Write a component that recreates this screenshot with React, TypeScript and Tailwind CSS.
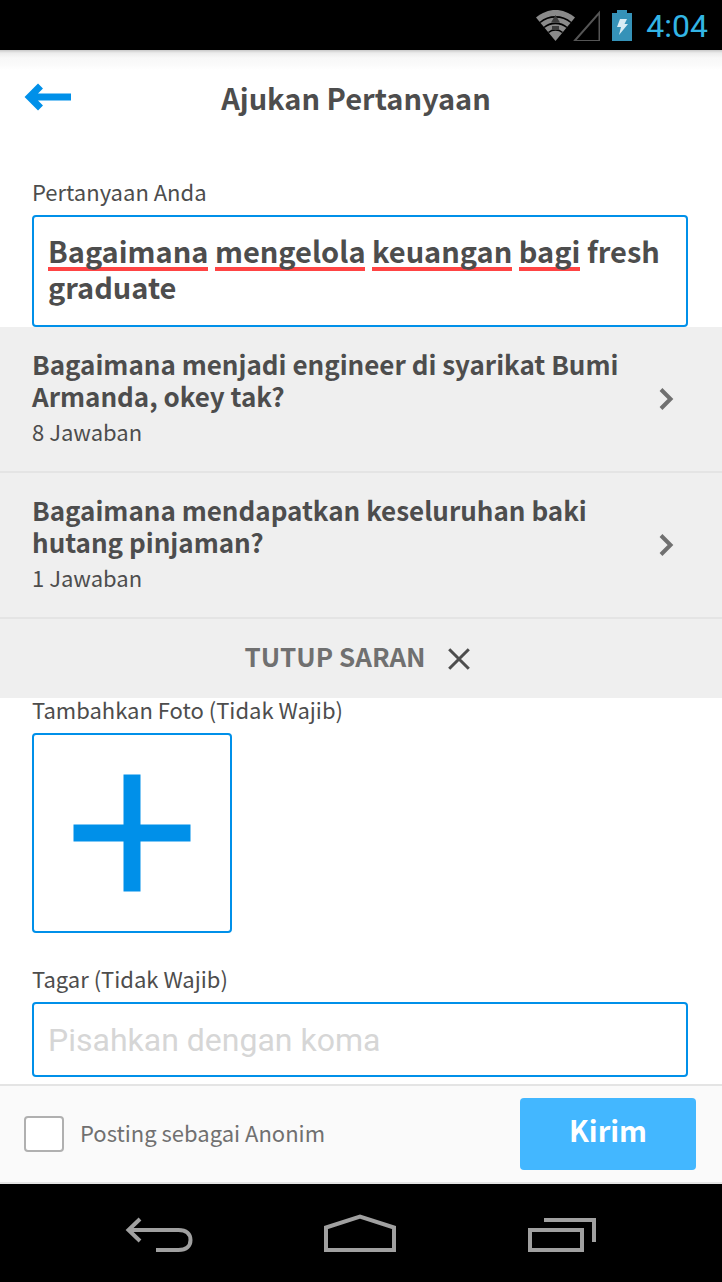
import { useState } from "react";

type Suggestion = { title: string; answers: number };

const suggestions: Suggestion[] = [
  { title: "Bagaimana menjadi engineer di syarikat Bumi Armanda, okey tak?", answers: 8 },
  { title: "Bagaimana mendapatkan keseluruhan baki hutang pinjaman?", answers: 1 },
];

const initialQuestion = "Bagaimana mengelola keuangan bagi fresh graduate";

function StatusBar() {
  return (
    <div className="flex h-[50px] shrink-0 items-center justify-end bg-black pr-[14px]">
      <svg className="h-8 w-10" viewBox="0 0 40 32" aria-label="Wi-Fi">
        <path d="M0 8.500C12 -1.500 27 -1.500 39 8.500L19.500 32Z" fill="#8a8a8a" />
        <path d="M4 13.500C13 6 26 6 35 13.500M8 18.500C14.500 13 24.500 13 31 18.500M12.500 23.500C16.500 20 22.500 20 26.500 23.500" fill="none" stroke="#000" strokeWidth="1.600" />
        <path d="M19.500 6l4.500 7.500h-9zM16 17h7v4h-7z" fill="#3d3d3d" />
      </svg>
      <svg className="-ml-1 h-8 w-7" viewBox="0 0 28 32" aria-label="Sinyal">
        <path d="M2.500 32L27.500 3.500V32Z" fill="none" stroke="#555" strokeWidth="2" />
      </svg>
      <svg className="ml-3 h-8 w-5" viewBox="0 0 20 32" aria-label="Baterai">
        <path d="M0 4h5V1h10v3h5v28H0Z" fill="#3592b8" />
        <path d="M8 10h7l-2.500 5H16L7 26l2-8H5Z" fill="#d9ecf4" />
      </svg>
      <span className="ml-[14px] pt-0.5 font-['Roboto',sans-serif] text-[32px] leading-9 text-[#33b5e5]">4:04</span>
    </div>
  );
}

function QuestionField() {
  const [question, setQuestion] = useState(initialQuestion);
  return (
    <div className="relative rounded border-2 border-[#0090e9] bg-white px-3.5 py-[15px]">
      {question === initialQuestion && (
        <div aria-hidden="true" className="pointer-events-none absolute top-[50px] left-3.5 flex h-1 gap-[7px]">
          <span className="w-40 bg-[#ff4444]" />
          <span className="w-[150px] bg-[#ff4444]" />
          <span className="w-[140px] bg-[#ff4444]" />
          <span className="w-[61px] bg-[#ff4444]" />
        </div>
      )}
      <textarea
        id="question"
        rows={2}
        spellCheck={false}
        value={question}
        onChange={(e) => setQuestion(e.target.value)}
        className="relative block h-[78px] w-full resize-none overflow-hidden bg-transparent text-[29px] leading-9 font-bold text-[#4d4d4d] outline-none"
      />
    </div>
  );
}

function SuggestionRow({ title, answers }: Suggestion) {
  return (
    <li className="border-b-2 border-[#e4e4e4]">
      <a href="#jawaban" className="flex items-center pr-12 pl-8">
        <span className="flex flex-1 flex-col gap-1.5 pt-[21px] pr-4 pb-[27px]">
          <span className="text-[26px] leading-8 font-bold">{title}</span>
          <span className="text-[22px] leading-[26px]">{answers} Jawaban</span>
        </span>
        <svg className="h-6 w-4" viewBox="0 0 16 24" aria-hidden="true">
          <path d="M3 2.500L12.500 12L3 21.500" fill="none" stroke="#707070" strokeWidth="4" />
        </svg>
      </a>
    </li>
  );
}

const labelClass = "mb-[13px] block text-[22px] leading-[22px]";

export default function App() {
  const [open, setOpen] = useState(true);
  return (
    <div className="flex min-h-screen flex-col bg-white font-['Noto_Sans_CJK_SC','Open_Sans',sans-serif] text-[#4d4d4d]">
      <StatusBar />
      <header className="flex h-[98px] items-center bg-[linear-gradient(#c8c8c8_0px,#ececec_3px,#f8f8f8_8px,#fafafa_14px,#ffffff_20px)] pr-[82px] pl-6">
        <button type="button" aria-label="Kembali" className="pb-1">
          <svg className="h-[30px] w-12" viewBox="0 0 48 30" aria-hidden="true">
            <path d="M47 15H6M16.500 4L5.500 15L16.500 26" fill="none" stroke="#0090e9" strokeWidth="7" />
          </svg>
        </button>
        <h1 className="flex-1 pb-1 text-center text-[29px] leading-9 font-bold">Ajukan Pertanyaan</h1>
      </header>

      <main className="pt-8 pb-[7px]">
        <div className="pr-[34px] pl-8">
          <label htmlFor="question" className={labelClass}>Pertanyaan Anda</label>
          <QuestionField />
        </div>

        {open && (
          <section className="bg-[#efefef]">
            <ul>
              {suggestions.map((s) => (
                <SuggestionRow key={s.title} {...s} />
              ))}
            </ul>
            <button type="button" onClick={() => setOpen(false)} className="flex h-[79px] w-full items-center justify-center gap-[22px] pr-2 text-[26px] leading-8 font-bold text-[#707070]">
              <span className="pb-1.5">TUTUP SARAN</span>
              <svg className="h-[22px] w-[22px]" viewBox="0 0 22 22" aria-hidden="true">
                <path d="M1.200 1.200L20.800 20.800M20.800 1.200L1.200 20.800" stroke="#4d4d4d" strokeWidth="3" />
              </svg>
            </button>
          </section>
        )}

        <div className="pr-[34px] pl-8">
          <label htmlFor="photo" className={labelClass}>Tambahkan Foto (Tidak Wajib)</label>
          <button id="photo" type="button" className="flex size-[200px] items-center justify-center rounded border-2 border-[#0090e9]">
            <svg className="size-[118px]" viewBox="0 0 118 118" aria-hidden="true">
              <path d="M59 0.500V117.500M0.500 59H117.500" stroke="#0090e9" strokeWidth="17" />
            </svg>
          </button>
        </div>

        <div className="pt-[34px] pr-[34px] pl-8">
          <label htmlFor="tags" className={labelClass}>Tagar (Tidak Wajib)</label>
          <input
            id="tags"
            type="text"
            placeholder="Pisahkan dengan koma"
            className="block h-[75px] w-full rounded border-2 border-[#0090e9] bg-white px-3.5 font-['Roboto',sans-serif] text-[32px] outline-none placeholder:text-[#d6d6d6]"
          />
        </div>
      </main>

      <footer className="flex items-center justify-between border-y-2 border-[#e4e4e4] bg-[#fafafa] py-3 pr-[26px] pl-6">
        <label className="flex items-center gap-4 text-[22px] leading-[26px] text-[#707070]">
          <input type="checkbox" className="h-9 w-10 appearance-none rounded border-2 border-[#b0b0b0] bg-white checked:bg-[#0090e9]" />
          <span className="pb-1">Posting sebagai Anonim</span>
        </label>
        <button type="submit" className="h-[72px] w-44 rounded bg-[#43b7ff] pb-2.5 text-[29px] leading-9 font-bold text-white">Kirim</button>
      </footer>

      <nav className="flex flex-1 items-start justify-center bg-black pt-[30px] pr-0.5 pb-[26px]">
        <button type="button" aria-label="Kembali" className="flex w-[201px] justify-center">
          <svg className="h-10 w-[72px]" viewBox="0 0 72 40" fill="none" stroke="#a0a0a0" strokeWidth="4" aria-hidden="true">
            <path d="M33 36H55.500C63.500 36 67.500 32 67.500 26C67.500 20 63.500 16 55.500 16H7M17 5L5.500 16L17 27" />
          </svg>
        </button>
        <button type="button" aria-label="Beranda" className="flex w-[201px] justify-center">
          <svg className="h-10 w-[72px]" viewBox="0 0 72 40" fill="none" stroke="#a0a0a0" strokeWidth="4" aria-hidden="true">
            <path d="M2 36V13.500L36 2.500L70 13.500V36Z" />
          </svg>
        </button>
        <button type="button" aria-label="Aplikasi terbaru" className="flex w-[201px] justify-center">
          <svg className="h-10 w-[72px]" viewBox="0 0 72 40" fill="none" stroke="#a0a0a0" strokeWidth="4" aria-hidden="true">
            <path d="M5 16H57V36H5ZM19 6H69V28" />
          </svg>
        </button>
      </nav>
    </div>
  );
}
